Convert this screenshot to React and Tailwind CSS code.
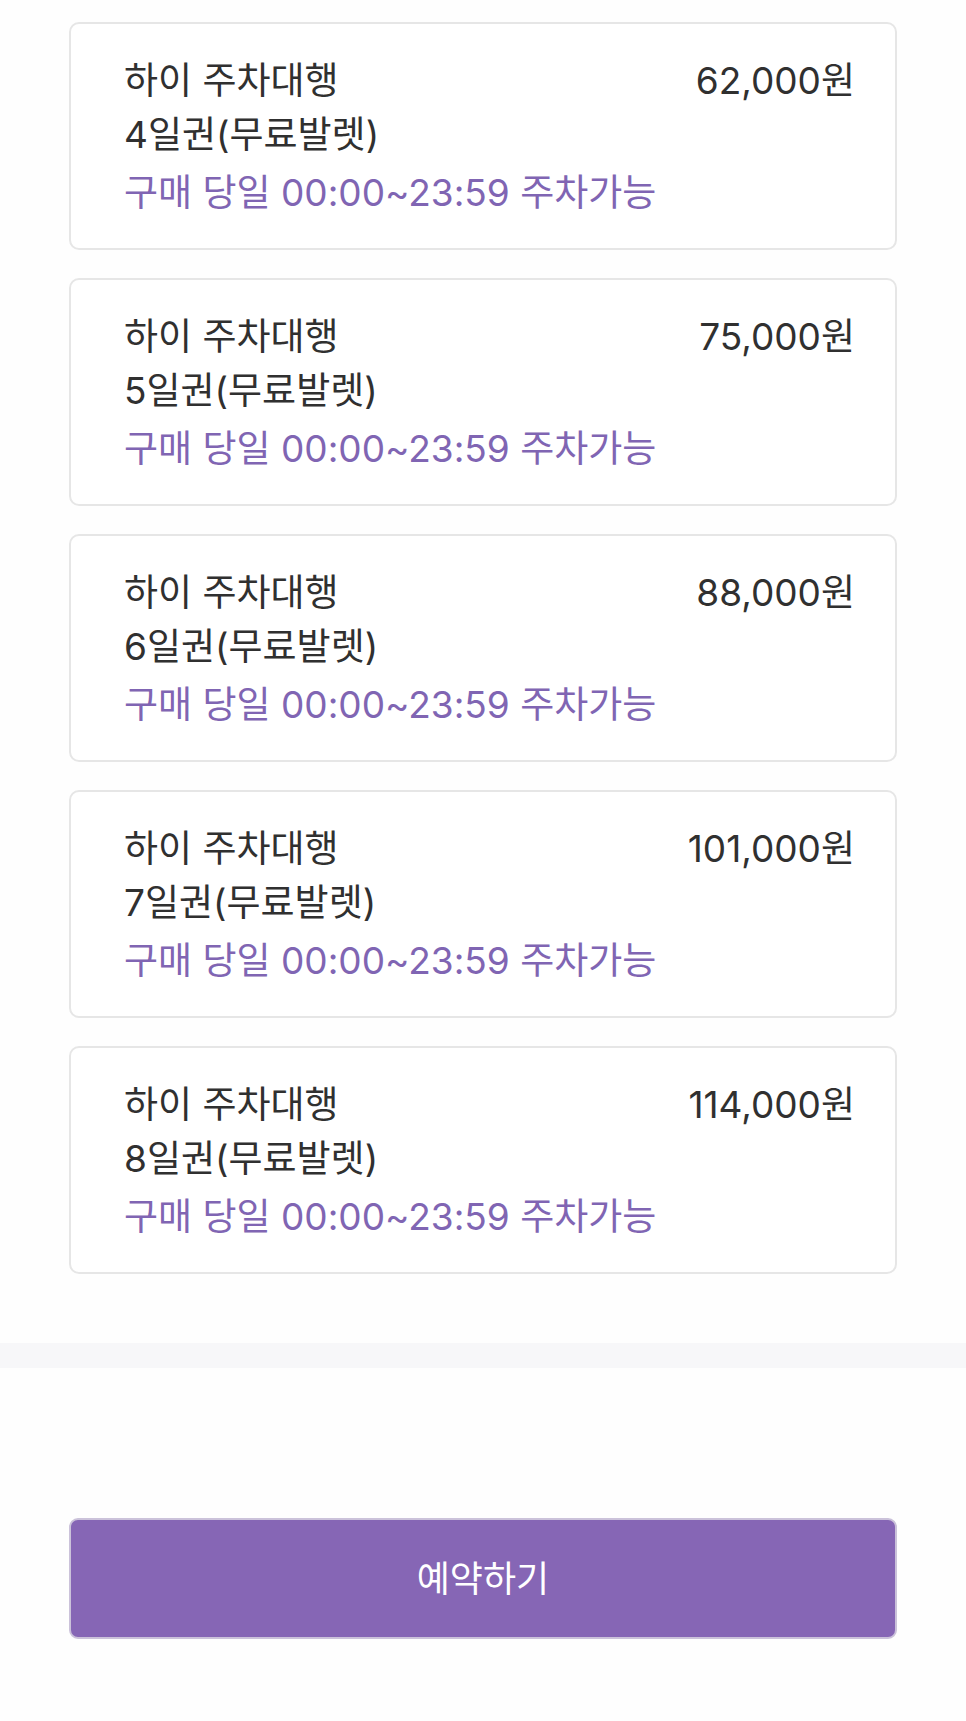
import React from "react";

const items = [
  { days: 4, price: "62,000원" },
  { days: 5, price: "75,000원" },
  { days: 6, price: "88,000원" },
  { days: 7, price: "101,000원" },
  { days: 8, price: "114,000원" },
];

export default function App() {
  return (
    <div
      className="w-[966px] min-h-[1721px] bg-[#fefefe] flex flex-col"
      style={{ fontFamily: '"Inter", "Noto Sans CJK KR", sans-serif' }}
    >
      <div className="px-[69px] pt-[22px] flex flex-col gap-[28px]">
        {items.map((it) => (
          <div
            key={it.days}
            className="h-[228px] rounded-[10px] border-2 border-[#e6e6e6] bg-white pl-[53px] pr-[40px] pt-[30px]"
          >
            <div className="flex justify-between text-[37px] leading-[54px] text-[#303030]">
              <span>하이 주차대행</span>
              <span>{it.price}</span>
            </div>
            <div className="text-[37px] leading-[54px] text-[#303030]">
              {it.days}일권(무료발렛)
            </div>
            <div className="text-[37px] leading-[54px] mt-[4px] text-[#8065b3]">
              구매 당일 00:00~23:59 주차가능
            </div>
          </div>
        ))}
      </div>
      <div className="mt-[69px] h-[25px] bg-[#f7f7f9]" />
      <div className="px-[69px] pt-[150px] pb-[84px]">
        <button className="w-full h-[121px] rounded-[9px] border-2 border-[#cbc2da] bg-[#8666b5] text-white text-[36px] flex items-center justify-center">
          예약하기
        </button>
      </div>
    </div>
  );
}
